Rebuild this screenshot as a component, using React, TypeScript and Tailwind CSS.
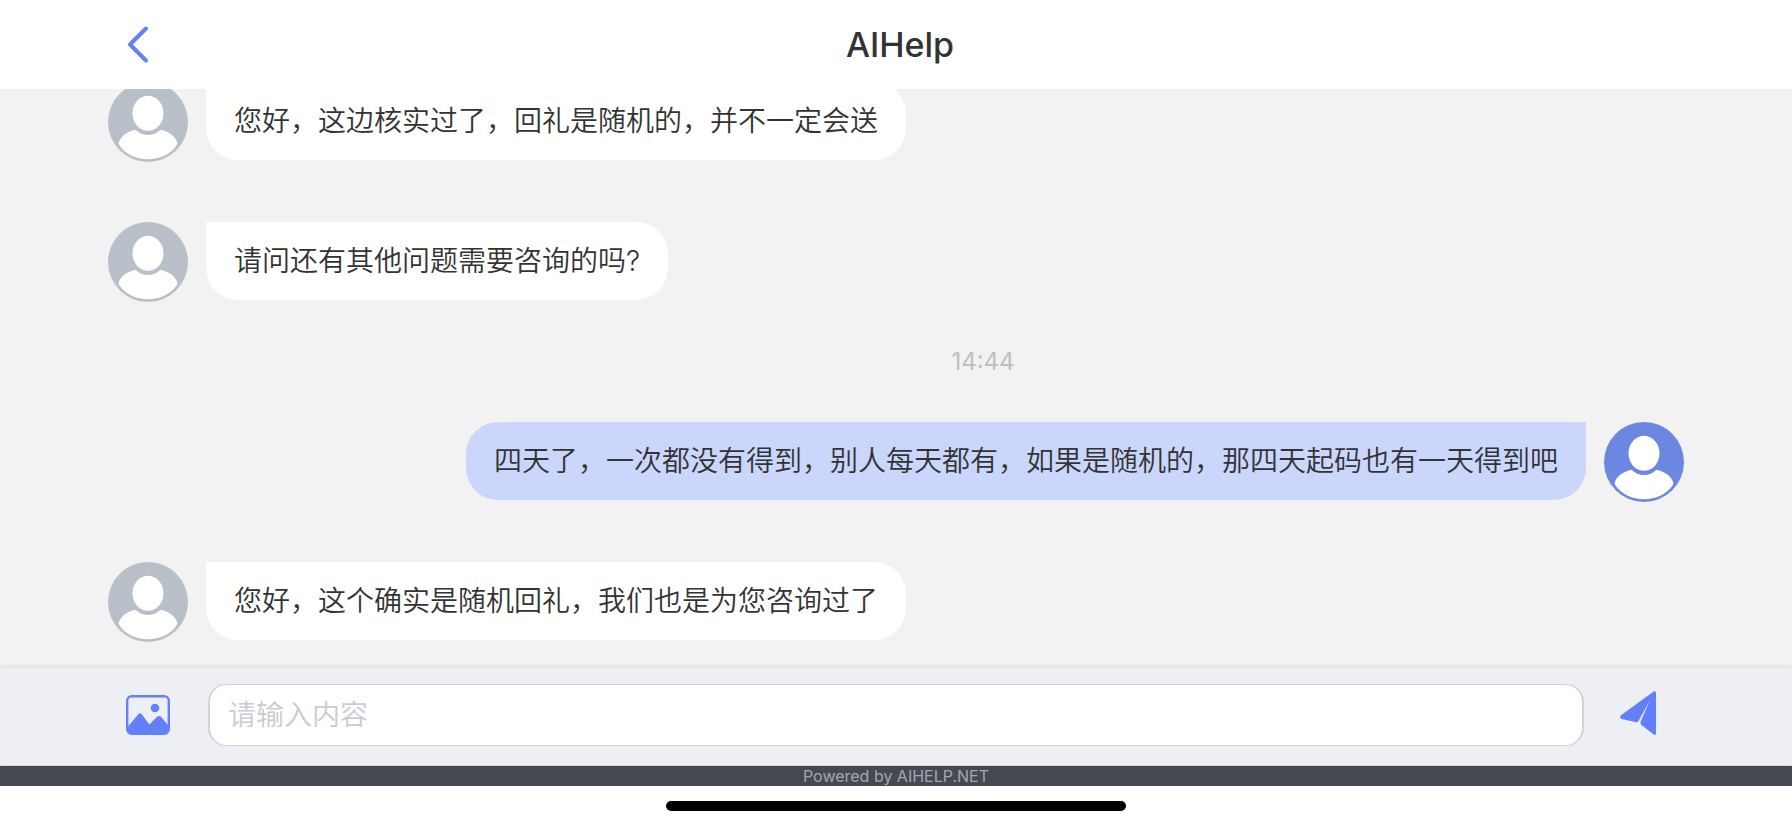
import { useState } from "react";

interface Message {
  id: number;
  from: "agent" | "user";
  text: string;
  time?: string;
}

const messages: Message[] = [
  { id: 1, from: "agent", text: "您好，这边核实过了，回礼是随机的，并不一定会送" },
  { id: 2, from: "agent", text: "请问还有其他问题需要咨询的吗?" },
  {
    id: 3,
    from: "user",
    text: "四天了，一次都没有得到，别人每天都有，如果是随机的，那四天起码也有一天得到吧",
    time: "14:44",
  },
  { id: 4, from: "agent", text: "您好，这个确实是随机回礼，我们也是为您咨询过了" },
];

function Avatar({ color }: { color: string }) {
  return (
    <svg viewBox="0 0 80 80" className={`size-20 shrink-0 ${color}`} aria-hidden="true">
      <circle cx="40" cy="40" r="40" fill="currentColor" />
      <ellipse cx="40" cy="31.3" rx="15.5" ry="17.5" fill="#fff" />
      <path
        d="M27.500 47.700C31 51 35 53 40 53s9-2 12.500-5.300C60 49.300 67 53.500 69.200 60.200Q69.700 62 68.500 63.600C62 72.500 52 77.300 40 77.300S18 72.500 11.500 63.600Q10.300 62 10.800 60.200C13 53.500 20 49.300 27.500 47.700Z"
        fill="#fff"
      />
    </svg>
  );
}

function MessageRow({ message }: { message: Message }) {
  const isUser = message.from === "user";

  return (
    <li>
      {/* Time stamp above the message */}
      {message.time ? (
        <div className="flex h-[120px] items-center justify-center pl-[174px] text-2xl text-[#c0c0c0]">
          <time>{message.time}</time>
        </div>
      ) : (
        <div className="h-15" />
      )}

      <div className={`flex items-start gap-[18px] ${isUser ? "flex-row-reverse" : ""}`}>
        <Avatar color={isUser ? "text-[#6b87e0]" : "text-[#b9bfc9]"} />
        <p
          className={`rounded-[32px] px-7 py-[19px] text-[28px] font-[350] leading-10 text-[#333] ${
            isUser ? "rounded-tr-none bg-[#cad6fc]" : "rounded-tl-none bg-white"
          }`}
        >
          {message.text}
        </p>
      </div>
    </li>
  );
}

export default function App() {
  const [draft, setDraft] = useState("");

  return (
    <div className="flex h-screen flex-col bg-white font-[Inter,'Noto_Sans_CJK_SC',sans-serif]">
      {/* Header */}
      <header className="flex h-[89px] shrink-0 items-center pl-27">
        <button type="button" aria-label="返回" className="flex h-14 w-14 items-center cursor-pointer">
          <svg viewBox="0 0 56 56" className="size-14" fill="none" stroke="#6280fb" strokeWidth="4" strokeLinecap="round" strokeLinejoin="round">
            <path d="M38 11.500L22 27.500L38 43.500" />
          </svg>
        </button>
        <h1 className="flex-1 pr-[156px] text-center text-[34px] leading-10 font-medium text-[#333]">AIHelp</h1>
      </header>

      {/* Messages */}
      <main className="flex min-h-0 flex-1 flex-col justify-end overflow-hidden bg-[#f2f2f2] px-27 pb-[26px]">
        <ul>
          {messages.map((message) => (
            <MessageRow key={message.id} message={message} />
          ))}
        </ul>
      </main>

      {/* Input bar */}
      <form
        onSubmit={(e) => {
          e.preventDefault();
          setDraft("");
        }}
        className="relative flex shrink-0 items-center border-b border-[#d3d5dc] bg-[#eeeff5] px-27 pt-4 pb-[19px] shadow-[0_-1px_6px_rgba(0,0,0,0.1)]"
      >
        <button type="button" aria-label="图片" className="flex w-[100px] pl-[18px] cursor-pointer">
          <svg viewBox="0 0 44 40" className="h-10 w-11" aria-hidden="true">
            <rect x="1.200" y="1.200" width="41.600" height="37.600" rx="4.500" fill="none" stroke="#6280fb" strokeWidth="2.400" />
            <circle cx="29" cy="13" r="4.300" fill="#6280fb" />
            <path d="M2 31.500L12.500 19Q14 17.500 15.500 19L23.500 29.500L31 21.800Q33 20 35 21.800L42 30V38H2Z" fill="#6280fb" />
          </svg>
        </button>
        <input
          type="text"
          aria-label="请输入内容"
          placeholder="请输入内容"
          value={draft}
          onChange={(e) => setDraft(e.target.value)}
          className="h-[62px] min-w-0 flex-1 rounded-[18px] border border-x-2 border-[#cdd3de] bg-white px-[18px] text-[28px] font-[350] text-[#333] outline-none placeholder:text-[#c8cbd1]"
        />
        <button type="submit" aria-label="发送" className="flex w-[100px] pb-1 pl-9 cursor-pointer">
          <svg viewBox="0 0 36 44" className="h-11 w-9" fill="#6280fb" aria-hidden="true">
            <path d="M34 0.300Q36 -0.300 36 2V42Q36 44.500 34 43.700L21.500 34Q20 32.500 20.700 30.500L29.500 10L18.500 30Q17.500 31.500 16 31.200L1.500 28Q-1 26.500 1 24.300Z" />
          </svg>
        </button>
      </form>

      {/* Footer */}
      <footer className="shrink-0">
        <p className="bg-[#464952] text-center text-base leading-5 text-[#a3a6af]">Powered by AIHELP.NET</p>
        <div className="flex h-[42px] items-center justify-center pb-0.5">
          <div className="h-2.5 w-[460px] rounded-full bg-black" />
        </div>
      </footer>
    </div>
  );
}
